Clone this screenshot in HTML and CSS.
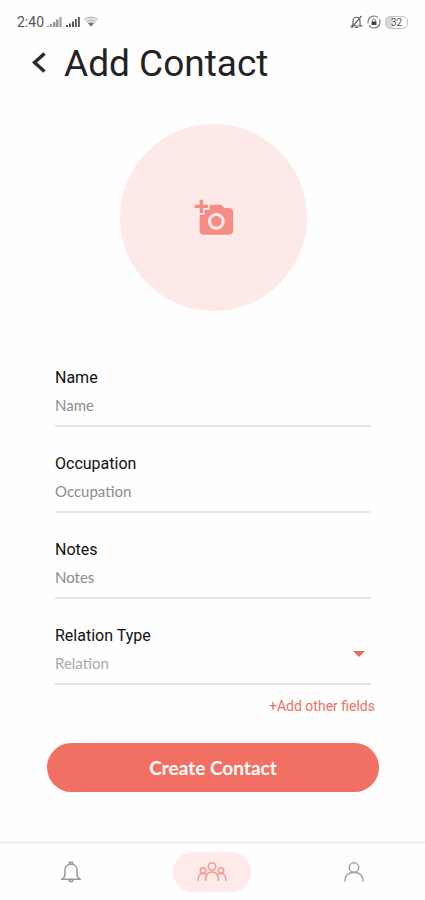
FILE: index.html
```html
<!DOCTYPE html>
<html lang="en">
<head>
<meta charset="utf-8">
<meta name="viewport" content="width=device-width, initial-scale=1">
<title>Add Contact</title>
<link rel="stylesheet" href="styles.css">
</head>
<body>
<div class="status">
  <div class="status-group">
    <span class="time">2:40</span>
    <svg class="signal signal-light" width="15" height="12" viewBox="0 0 15 12"><path d="M0 9.500h2V11H0zM3 8h2v3H3zM6 6h2.500v5H6zM9 3.500h2.500V11H9zM12.500 1h2v10h-2z"/></svg>
    <svg class="signal" width="15" height="12" viewBox="0 0 15 12"><path d="M1 9h2v2H1zM4 7.500h2V11H4zM7 5.500h2V11H7zM10 3h1.800v8H10zM13 1h1.800v10H13z"/></svg>
    <svg width="16" height="12" viewBox="0 0 16 12" fill="none"><path d="M1 3.500Q8-1.500 15 3.500L8 11z" fill="#e4e4e4"/><path d="M1 3.500Q8-1.500 15 3.500M3.500 5.500Q8 2.500 12.500 5.500" stroke="#b5b5b5"/><path d="M5 7.500Q8 5.500 11 7.500L8 10.500z" fill="#777"/></svg>
  </div>
  <div class="status-group status-right">
    <svg width="13" height="14" viewBox="0 0 13 14" fill="none" stroke="#666" stroke-width="1.200"><path d="M3 10V6c0-5 7-5 7 0v4l1.500 1H1.500zM5 12.500h3M11.500 1L1.500 13"/></svg>
    <svg width="14" height="14" viewBox="0 0 14 14" fill="none" stroke="#777"><circle cx="7" cy="7" r="6" stroke-width="1.200" stroke-dasharray="15 2"/><path d="M5.500 7V5.500a1.500 1.500 0 0 1 3 0V7"/><path d="M4.500 6.500h5V10h-5z" fill="#444" stroke="none"/></svg>
    <span class="battery">32</span>
  </div>
</div>

<header class="header">
  <button class="back" type="button" aria-label="Back">
    <svg width="14" height="22" viewBox="0 0 14 22" fill="none" stroke="#2b2b2b" stroke-width="3.500"><path d="M12.500 1.500L2.500 10.500l10 9"/></svg>
  </button>
  <h1>Add Contact</h1>
</header>

<form class="form">
  <button class="photo" type="button" aria-label="Add photo">
    <svg width="40" height="40" viewBox="-1 0 24 24" fill="#f58d84"><path d="M3 4V1h2v3h3v2H5v3H3V6H0V4h3zm3 6V7h3V4h7l1.830 2H21c1.100 0 2 .9 2 2v12c0 1.100-.9 2-2 2H5c-1.100 0-2-.9-2-2V10h3zm7 9c2.760 0 5-2.240 5-5s-2.240-5-5-5-5 2.240-5 5 2.240 5 5 5zm-3.200-5c0 1.770 1.430 3.200 3.200 3.200s3.200-1.430 3.200-3.200-1.430-3.200-3.200-3.200-3.200 1.430-3.200 3.200z"/></svg>
  </button>

  <div class="fields">
    <div class="field">
      <label for="name">Name</label>
      <input id="name" type="text" placeholder="Name">
    </div>
    <div class="field">
      <label for="occupation">Occupation</label>
      <input id="occupation" type="text" placeholder="Occupation">
    </div>
    <div class="field">
      <label for="notes">Notes</label>
      <input id="notes" type="text" placeholder="Notes">
    </div>
    <div class="field field-select">
      <label for="relation">Relation Type</label>
      <select id="relation"><option>Relation</option></select>
      <svg class="caret" width="12" height="6" viewBox="0 0 12 6"><path d="M0 0h12L6 6z" fill="#e96a5f"/></svg>
    </div>
  </div>

  <a class="more" href="#">+Add other fields</a>
  <button class="submit" type="submit">Create Contact</button>
</form>

<nav class="nav">
  <a href="#" aria-label="Notifications">
    <svg width="20" height="22" viewBox="0 0 20 22" fill="none" stroke="#9a9a9a" stroke-width="1.500"><path d="M1 18.200h18c-2-1.200-3-3-3-5.700V8.500c0-7-12-7-12 0v4c0 2.700-1 4.500-3 5.700z"/><path d="M8.500 3V1.200h3V3M8 18.500c0 2.800 4 2.800 4 0"/></svg>
  </a>
  <a class="active" href="#" aria-label="Contacts">
    <svg width="30" height="20" viewBox="0 0 30 20" fill="none" stroke="#f29b96" stroke-width="1.500"><circle cx="15" cy="4.500" r="3.700"/><circle cx="6" cy="8.500" r="2.700"/><circle cx="24" cy="8.500" r="2.700"/><path d="M8.500 19c0-6 2.500-9 6.500-9s6.500 3 6.500 9M1 19c0-5 2-7.500 5-7.500 1.500 0 2.500.5 3.500 1.500M29 19c0-5-2-7.500-5-7.500-1.500 0-2.500.5-3.500 1.500"/></svg>
  </a>
  <a href="#" aria-label="Profile">
    <svg width="20" height="20" viewBox="0 0 20 20" fill="none" stroke="#a3a3a3" stroke-width="1.500"><circle cx="10" cy="5.500" r="4.700"/><path d="M.8 19.500c0-6 3.500-9 9.200-9s9.200 3 9.200 9"/></svg>
  </a>
</nav>
</body>
</html>
```
FILE: styles.css
```css
* {
  box-sizing: border-box;
}

body {
  display: flex;
  flex-direction: column;
  min-height: 100vh;
  margin: 0;
  background: #fefefe;
  color: #222;
  font-family: Roboto, sans-serif;
}

svg {
  display: block;
}

button,
input,
select {
  margin: 0;
  padding: 0;
  border: 0;
  background: none;
}

.status {
  display: flex;
  justify-content: space-between;
  align-items: center;
  height: 44px;
  padding: 0 17px;
}

.status-group {
  display: flex;
  align-items: center;
  gap: 3px;
}

.status-right {
  gap: 4px;
}

.time {
  color: #555;
  font-size: 14px;
}

.signal {
  fill: #555;
}

.signal-light {
  fill: #999;
}

.battery {
  width: 23px;
  border: 1px solid #c4c4c4;
  border-radius: 5px;
  background: linear-gradient(90deg, #d8d8d8 35%, #fff 35%);
  color: #555;
  font-size: 10px;
  line-height: 11px;
  text-align: center;
}

.header {
  display: flex;
  align-items: center;
  gap: 18px;
  height: 40px;
  padding: 0 32px;
}

.back {
  margin-bottom: 3px;
}

h1 {
  margin: 0;
  font-size: 37px;
  font-weight: 400;
  line-height: 40px;
}

.form {
  display: flex;
  flex-direction: column;
  padding: 40px 46px 48px 47px;
}

.photo {
  display: grid;
  place-items: center;
  align-self: center;
  width: 187px;
  height: 187px;
  border-radius: 50%;
  background: #fdeae8;
}

.fields {
  display: grid;
  gap: 27px;
  margin: 57px 8px 0;
}

.field {
  position: relative;
  display: flex;
  flex-direction: column;
  border-bottom: 2px solid #e6e6e6;
}

.field label {
  color: #111;
  font-size: 16px;
  line-height: 20px;
}

.field input,
.field select {
  width: 100%;
  height: 37px;
  padding-bottom: 3px;
  appearance: none;
  color: #aaa;
  font-family: Lato, sans-serif;
  font-size: 15px;
}

.field input::placeholder {
  color: #8c8c8c;
}

.caret {
  position: absolute;
  right: 6px;
  bottom: 26px;
}

.more {
  align-self: flex-end;
  margin: 11px 4px 0;
  color: #ee7065;
  font-size: 14px;
  line-height: 20px;
  text-decoration: none;
}

.submit {
  height: 49px;
  margin-top: 27px;
  border-radius: 25px;
  background: #f27063;
  color: #fff;
  font-family: Lato, sans-serif;
  font-size: 19px;
  font-weight: 700;
}

.nav {
  display: grid;
  grid-template-columns: repeat(3, 1fr);
  align-items: center;
  justify-items: center;
  height: 59px;
  margin-top: auto;
  padding-bottom: 1px;
  border-top: 3px solid #f3f3f3;
}

.active {
  display: grid;
  place-items: center;
  width: 78px;
  height: 40px;
  border-radius: 20px;
  background: #fdeae9;
}
```
